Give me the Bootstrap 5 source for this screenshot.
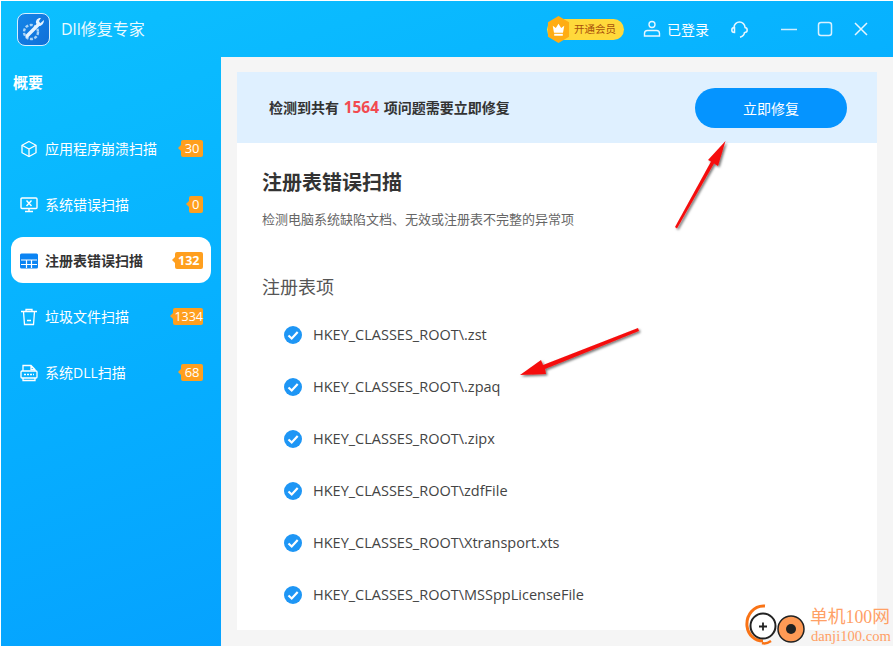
<!DOCTYPE html>
<html lang="zh">
<head>
<meta charset="utf-8">
<title>Dll修复专家</title>
<link rel="stylesheet" href="https://cdn.jsdelivr.net/npm/bootstrap@5.3.0/dist/css/bootstrap.min.css">
<style>
html,body{height:100%;margin:0}
body{font-family:"Open Sans","Noto Sans CJK SC",sans-serif;background:#fff;overflow:hidden}
.app-win{width:894px;height:647px;padding:1px;position:relative;background:#fff}
.app-inner{height:100%;background:linear-gradient(160deg,#0cc0ff 0%,#06aeff 45%,#0598ff 100%);display:flex;flex-direction:column}
.app-head{height:56px;flex:none;padding:0 24px 0 16px;color:#fff}
.app-logo{width:33px;height:33px;border-radius:8px;border:1px solid #d5efff;background:linear-gradient(135deg,#1585e8,#0f6fd8);margin-right:11px}
.app-title{font-size:16px;color:#eafaff}
.vip-wrap{height:21px;background:#ffd93b;border-radius:11px;padding:0 6px 0 27px;font-size:10.5px;color:#a8500b;width:77px;margin-right:19px;line-height:21px;white-space:nowrap;position:relative}
.vip-hex{position:absolute;left:0;top:-3px}
.login-txt{font-size:14px;margin-left:6px;margin-right:22px}
.sys-min{margin-left:33px}
.sys-gap{margin-left:20px}
.app-body{flex:1;min-height:0}
.side-col{width:220px;flex:none;padding:0 10px;color:#fff}
.side-title{font-size:15px;font-weight:700;padding:14px 2px 0 2px;line-height:22px;margin-bottom:32px}
.side-item{height:46px;margin-bottom:10px;border-radius:12px;padding:1px 8px 0 9px;font-size:14px;color:#fff;white-space:nowrap}
.side-item.is-on{background:#fff;color:#333;font-weight:700}
.side-ic{width:18px;height:18px;margin-right:7px;flex:none}
.count-tag{background:#ff9f1e;color:#fff;font-size:13px;font-weight:400;line-height:17px;height:17px;padding:0 3.5px;border-radius:2px;position:relative;margin-left:auto}
.count-tag.tag-wide{padding:0 0 0 1px;font-size:12.5px}
.count-tag.tag-bold{font-weight:700;font-size:12.5px}
.count-tag::before{content:"";position:absolute;left:-3px;top:5px;border:3.5px solid transparent;border-left:0;border-right-color:#ff9f1e}
.main-pane{flex:1;background:#f5f5f5;padding:15px 16px 16px 16px;min-width:0}
.main-card{background:#fff;height:100%;overflow:hidden}
.alert-bar{height:71px;background:#dff0ff;padding:1px 30px 0 32px;font-size:14px;font-weight:700;color:#333}
.alert-num{color:#f24a50;font-size:15.5px;margin:0 1px}
.fix-btn{width:152px;height:40px;border-radius:20px;background:#0594ff;color:#fff;font-size:14px;border:0}
.fix-btn:hover{background:#0594ff;color:#fff}
.card-body-wrap{padding:25px 25px 0 25px}
.reg-h{font-size:20px;font-weight:700;color:#333;line-height:30px;margin:0}
.reg-sub{font-size:13px;color:#666;line-height:18px;margin:12px 0 0}
.reg-sec{font-size:18px;color:#555;line-height:26px;margin:46px 0 9px}
.reg-row{height:52px;padding-left:22px;font-size:14.5px;color:#444}
.reg-row svg{margin-right:11px;flex:none}
.overlay-arrows{position:absolute;left:0;top:0;pointer-events:none}
.wm{position:absolute;left:745px;top:604px;width:149px;height:43px}
.wm-cn{position:absolute;left:65px;top:2px;font-family:"Liberation Serif","Noto Sans CJK SC",serif;font-size:17.800px;line-height:22px;color:#ffa066;white-space:nowrap}
.wm-en{position:absolute;left:66px;top:23px;font-family:"Liberation Serif",serif;font-size:14.600px;line-height:18px;color:#ffa066;white-space:nowrap}
</style>
</head>
<body>
<div class="app-win">
 <div class="app-inner">
  <div class="app-head d-flex align-items-center">
   <div class="app-logo d-flex align-items-center justify-content-center">
    <svg width="27" height="27" viewBox="0 0 27 27" fill="none"><circle cx="11" cy="16" r="7" stroke="#a9d4f7" stroke-width="2.400" stroke-dasharray="3 1.500"/><path d="M7 20L19 8" stroke="#e6f4ff" stroke-width="3.400" stroke-linecap="round"/><path d="M24 4l-4 3.500-1-2.500 2-3c-3-.6-5.500 2-5 5l2 3c3 .6 6-2 6-6z" fill="#e6f4ff"/></svg>
   </div>
   <span class="app-title">Dll修复专家</span>
   <div class="ms-auto d-flex align-items-center">
    <div class="vip-wrap">
     <svg class="vip-hex" width="23" height="27" viewBox="0 0 24 28"><path d="M12 0l11 6.500v15L12 28 1 21.500v-15z" fill="#ffad12"/><path d="M6 10l3.200 2.500L12 8l2.800 4.500L18 10l-1.300 7.500H7.300z" fill="#fff"/><rect x="7.500" y="18.500" width="9" height="2" fill="#fff"/></svg>
     开通会员
    </div>
    <svg width="18" height="18" viewBox="0 0 18 18" fill="none" stroke="#e6f6ff" stroke-width="1.400"><circle cx="9" cy="4.500" r="3"/><path d="M1.500 16v-2.500c0-2 1.500-3 3-3h9c1.500 0 3 1 3 3V16z"/></svg>
    <span class="login-txt">已登录</span>
    <svg width="17" height="17" viewBox="0 0 17 17" fill="none" stroke="#e6f6ff" stroke-width="1.500"><path d="M3 6.500C3 3.500 5.500 1 8.500 1S14 3.500 14 6.500"/><path d="M3.500 6.500C1.500 6.500 .8 8 .8 9s.7 2.500 2.700 2.500zM13.500 6.500c2 0 2.700 1.500 2.700 2.500s-.7 2.500-2.700 2.500"/><path d="M13.500 11c0 2.500-1.500 4.300-4.500 5.200"/></svg>
    <svg class="sys-min" width="16" height="16" viewBox="0 0 16 16" stroke="#cfeeff" stroke-width="1.500"><path d="M0 8.500h16"/></svg>
    <svg class="sys-gap" width="16" height="16" viewBox="0 0 16 16" fill="none" stroke="#d9f1ff" stroke-width="1.500"><rect x="1.500" y="1.500" width="13" height="13" rx="2.500"/></svg>
    <svg class="sys-gap" width="16" height="16" viewBox="0 0 16 16" fill="none" stroke="#e6f6ff" stroke-width="1.500"><path d="M2 2l12 12M14 2L2 14"/></svg>
   </div>
  </div>
  <div class="app-body d-flex">
   <aside class="side-col">
    <div class="side-title">概要</div>
    <div class="side-item d-flex align-items-center">
     <svg class="side-ic" viewBox="0 0 18 18" fill="none" stroke="#fff" stroke-width="1.300"><path d="M9 1.500l7 3.800v7.400l-7 3.800-7-3.800V5.300z"/><path d="M2 5.300L9 9l7-3.700M9 9v7.500"/></svg>
     <span>应用程序崩溃扫描</span><span class="count-tag">30</span>
    </div>
    <div class="side-item d-flex align-items-center">
     <svg class="side-ic" viewBox="0 0 18 18" fill="none" stroke="#fff" stroke-width="1.400"><rect x="1" y="2" width="16" height="10.500" rx="1"/><path d="M6.500 4.500l5 5.500M11.500 4.500l-5 5.500M5 15.500h8M9 12.500v3"/></svg>
     <span>系统错误扫描</span><span class="count-tag">0</span>
    </div>
    <div class="side-item is-on d-flex align-items-center">
     <svg class="side-ic" viewBox="0 0 18 18"><rect y="1.500" width="18" height="15" rx="1.500" fill="#0b84f3"/><path d="M1 8h16M1 12.500h16M6.500 8v8M11.500 8v8" stroke="#fff" stroke-width="1.200"/></svg>
     <span>注册表错误扫描</span><span class="count-tag tag-bold">132</span>
    </div>
    <div class="side-item d-flex align-items-center">
     <svg class="side-ic" viewBox="0 0 18 18" fill="none" stroke="#fff" stroke-width="1.300"><path d="M1 3.500h16M6 3.500V1.500h6v2M3.500 3.500l1 13h9l1-13M7 12.500h4"/></svg>
     <span>垃圾文件扫描</span><span class="count-tag tag-wide">1334</span>
    </div>
    <div class="side-item d-flex align-items-center">
     <svg class="side-ic" viewBox="0 0 18 18" fill="none" stroke="#fff" stroke-width="1.300"><path d="M3 7V1.500h8l4 4V7M11 1.500v4h4M3 14v2.500h12V14"/><rect x="1" y="7" width="16" height="7" rx="1"/><path d="M4 10.500h10" stroke-dasharray="2 1"/></svg>
     <span>系统DLL扫描</span><span class="count-tag">68</span>
    </div>
   </aside>
   <main class="main-pane">
    <div class="main-card">
     <div class="alert-bar d-flex align-items-center justify-content-between">
      <div>检测到共有 <span class="alert-num">1564</span> 项问题需要立即修复</div>
      <button class="btn fix-btn" type="button">立即修复</button>
     </div>
     <div class="card-body-wrap">
      <h1 class="reg-h">注册表错误扫描</h1>
      <p class="reg-sub">检测电脑系统缺陷文档、无效或注册表不完整的异常项</p>
      <div class="reg-sec">注册表项</div>
      <div class="reg-row d-flex align-items-center"><svg width="18" height="18" viewBox="0 0 18 18"><circle cx="9" cy="9" r="9" fill="#1e96f5"/><path d="M4.500 9.500l3.200 3 6-6.500" fill="none" stroke="#fff" stroke-width="2.200"/></svg>HKEY_CLASSES_ROOT\.zst</div>
      <div class="reg-row d-flex align-items-center"><svg width="18" height="18" viewBox="0 0 18 18"><circle cx="9" cy="9" r="9" fill="#1e96f5"/><path d="M4.500 9.500l3.200 3 6-6.500" fill="none" stroke="#fff" stroke-width="2.200"/></svg>HKEY_CLASSES_ROOT\.zpaq</div>
      <div class="reg-row d-flex align-items-center"><svg width="18" height="18" viewBox="0 0 18 18"><circle cx="9" cy="9" r="9" fill="#1e96f5"/><path d="M4.500 9.500l3.200 3 6-6.500" fill="none" stroke="#fff" stroke-width="2.200"/></svg>HKEY_CLASSES_ROOT\.zipx</div>
      <div class="reg-row d-flex align-items-center"><svg width="18" height="18" viewBox="0 0 18 18"><circle cx="9" cy="9" r="9" fill="#1e96f5"/><path d="M4.500 9.500l3.200 3 6-6.500" fill="none" stroke="#fff" stroke-width="2.200"/></svg>HKEY_CLASSES_ROOT\zdfFile</div>
      <div class="reg-row d-flex align-items-center"><svg width="18" height="18" viewBox="0 0 18 18"><circle cx="9" cy="9" r="9" fill="#1e96f5"/><path d="M4.500 9.500l3.200 3 6-6.500" fill="none" stroke="#fff" stroke-width="2.200"/></svg>HKEY_CLASSES_ROOT\Xtransport.xts</div>
      <div class="reg-row d-flex align-items-center"><svg width="18" height="18" viewBox="0 0 18 18"><circle cx="9" cy="9" r="9" fill="#1e96f5"/><path d="M4.500 9.500l3.200 3 6-6.500" fill="none" stroke="#fff" stroke-width="2.200"/></svg>HKEY_CLASSES_ROOT\MSSppLicenseFile</div>
     </div>
    </div>
   </main>
  </div>
 </div>
 <svg class="overlay-arrows" width="894" height="647" viewBox="0 0 894 647">
  <defs><filter id="sh" x="-30%" y="-30%" width="160%" height="160%"><feDropShadow dx="1.500" dy="1.500" stdDeviation="1.300" flood-color="#000" flood-opacity=".55"/></filter></defs>
  <g filter="url(#sh)" fill="#f50d0d">
   <path d="M675 227L677 228.500 714 163.500 718 166 725.500 141 708 160 711 161.500z"/>
   <path d="M638 328L639 331 545 369 546 374 520 375 541 360 543 365z"/>
  </g>
 </svg>
 <div class="wm">
  <svg class="position-absolute top-0 start-0" width="64" height="43" viewBox="0 0 64 43" fill="none">
   <path d="M20 2C9 1 1 11 2 22c1 9 8 15 16 15" stroke="#f97316" stroke-width="3"/>
   <path d="M26 37c-3 2-6 3-9 2" stroke="#f97316" stroke-width="2.500"/>
   <circle cx="18" cy="22" r="12.500" fill="#fff" stroke="#222" stroke-width="2"/>
   <path d="M14 22.500h8M18 18.500v8" stroke="#222" stroke-width="1.800"/>
   <circle cx="46" cy="25" r="13" fill="#ff9a55" stroke="#222" stroke-width="1.500"/>
   <circle cx="46" cy="25" r="5" fill="#222"/>
  </svg>
  <div class="wm-cn">单机100网</div>
  <div class="wm-en">danji100.com</div>
 </div>
</div>
<script src="https://cdn.jsdelivr.net/npm/bootstrap@5.3.0/dist/js/bootstrap.bundle.min.js"></script>
</body>
</html>
